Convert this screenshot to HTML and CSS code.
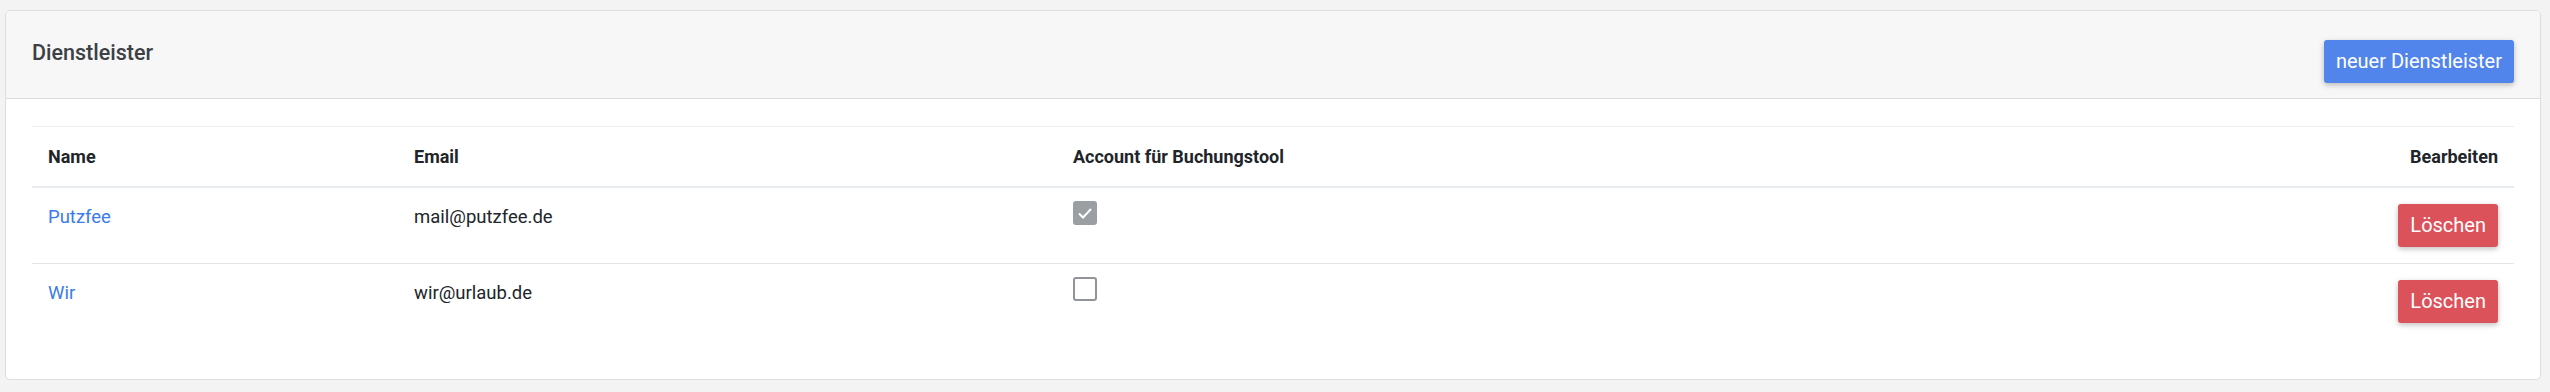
FILE: index.html
```html
<!DOCTYPE html>
<html lang="de">
<head>
  <meta charset="UTF-8">
  <title>Dienstleister</title>
  <link rel="stylesheet" href="styles.css">
</head>
<body>
  <div class="card">
    <div class="card-header">
      <h5 class="card-title">Dienstleister</h5>
      <button class="btn btn-primary" type="button">neuer Dienstleister</button>
    </div>
    <div class="card-body">
      <table class="table">
        <thead>
          <tr>
            <th class="col-name">Name</th>
            <th class="col-email">Email</th>
            <th>Account für Buchungstool</th>
            <th class="col-edit">Bearbeiten</th>
          </tr>
        </thead>
        <tbody>
          <tr>
            <td><a href="#">Putzfee</a></td>
            <td>mail@putzfee.de</td>
            <td>
              <span class="check checked">
                <svg viewBox="0 0 24 24" width="24" height="24"><polyline points="6,12.5 10,16.5 18,8" fill="none" stroke="#fff" stroke-width="2"/></svg>
              </span>
            </td>
            <td class="col-edit"><button class="btn btn-danger" type="button">Löschen</button></td>
          </tr>
          <tr>
            <td><a href="#">Wir</a></td>
            <td>wir@urlaub.de</td>
            <td><span class="check"></span></td>
            <td class="col-edit"><button class="btn btn-danger" type="button">Löschen</button></td>
          </tr>
        </tbody>
      </table>
    </div>
  </div>
</body>
</html>
```

FILE: styles.css
```css
* {
  margin: 0;
  padding: 0;
  box-sizing: border-box;
}
body {
  background: #f3f3f3;
  font-family: Roboto, "Noto Sans", sans-serif;
  font-size: 18.5px;
  color: #212529;
  padding: 10px 9px 11px 5px;
}
.card {
  background: #fff;
  border: 1px solid #dedede;
  border-radius: 5px;
  overflow: hidden;
}
.card-header {
  background: #f7f7f7;
  border-bottom: 1px solid #dcdcdc;
  padding: 29px 26px 15px 26px;
  display: flex;
  justify-content: space-between;
  align-items: flex-start;
}
.card-title {
  font-size: 21.5px;
  font-weight: 500;
  line-height: 1.2;
  color: #3d4145;
}
.card-body {
  padding: 27px 26px 40px 26px;
}

/* Buttons */
.btn {
  border: none;
  border-radius: 3px;
  font-family: Roboto, sans-serif;
  font-size: 20px;
  line-height: 31px;
  padding: 6px 12px;
  color: #fff;
  cursor: pointer;
  box-shadow: 0 2px 5px rgba(0, 0, 0, 0.18), 0 2px 8px rgba(0, 0, 0, 0.08);
}
.btn-primary {
  background: #5285ec;
}
.btn-danger {
  background: #dc525a;
}

/* Tabelle */
.table {
  width: 100%;
  border-collapse: collapse;
  table-layout: fixed;
}
.table th,
.table td {
  padding: 16px;
  text-align: left;
  vertical-align: top;
  line-height: 1.5;
}
.table th {
  font-size: 18px;
  font-weight: 700;
  border-top: 1px solid #eceef1;
  border-bottom: 2px solid #e9ecef;
}
.table tbody tr + tr td {
  border-top: 1px solid #e3e4e6;
}
.col-name {
  width: 366px;
}
.col-email {
  width: 659px;
}
.table .col-edit {
  width: 300px;
  text-align: right;
}
.table a {
  color: #3a7bec;
  text-decoration: none;
}

/* Checkbox */
.check {
  display: block;
  width: 24px;
  height: 24px;
  margin-top: -3px;
  border: 2px solid #909397;
  border-radius: 3px;
  background: #fff;
}
.check.checked {
  border: none;
  background: #9b9ea2;
}
.check svg {
  display: block;
}
```
